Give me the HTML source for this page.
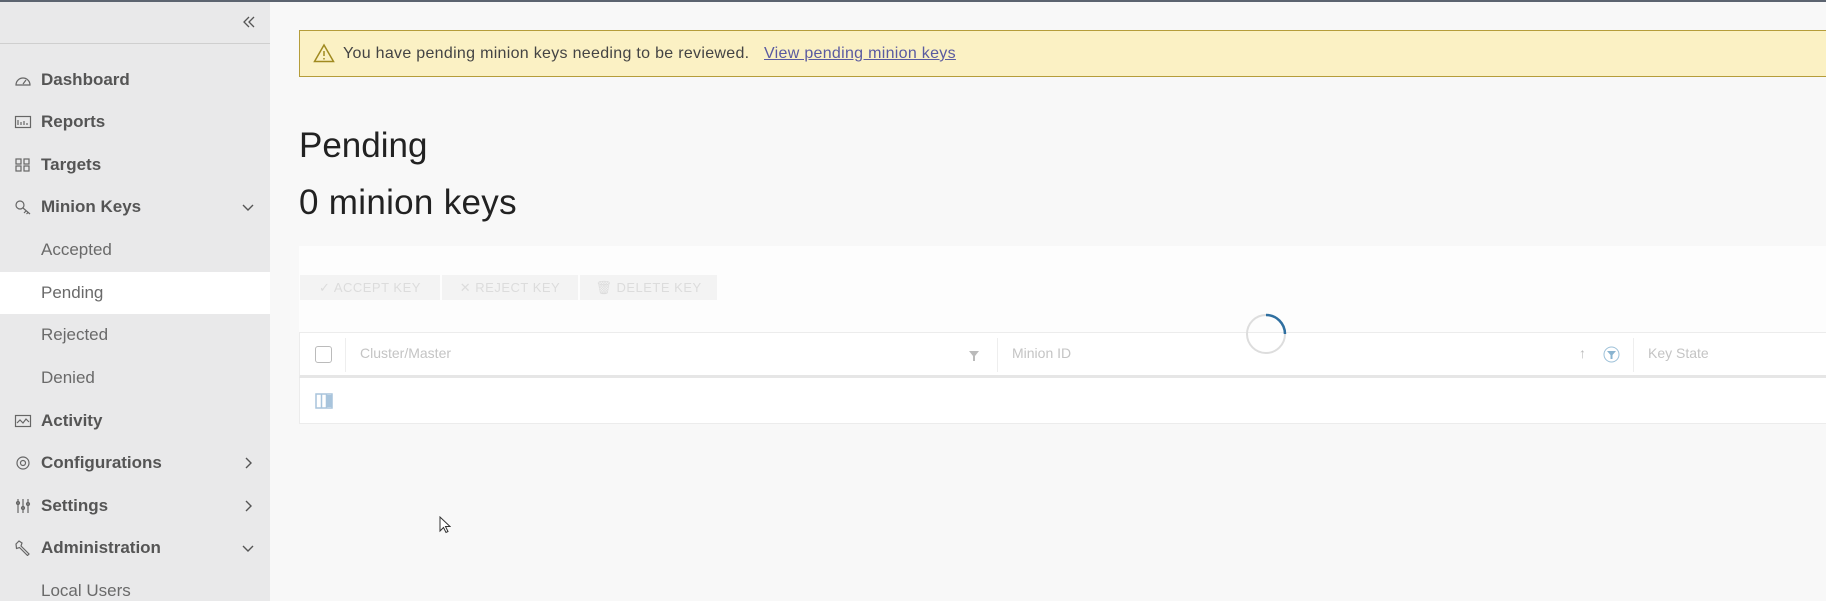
<!DOCTYPE html>
<html><head><meta charset="utf-8"><style>
*{margin:0;padding:0;box-sizing:border-box}
html,body{width:1826px;height:601px;overflow:hidden}
body{background:#f8f8f8;font-family:"Liberation Sans",sans-serif;position:relative}
.topbar{position:absolute;left:0;top:0;width:1826px;height:2px;background:#5c6470}
.side{position:absolute;left:0;top:2px;width:270px;height:599px;background:#e9e9ea}
.col{position:absolute;left:0;top:41px;width:270px;height:1px;background:#cfcfcf}
.it{position:absolute;left:0;width:270px;height:42px;line-height:42px;font-size:17px;color:#555}
.it b{position:absolute;left:41px;font-weight:bold;color:#555}
.it span{position:absolute;left:41px;color:#6a6a6a}
.it svg.ic{position:absolute;left:14px;top:13px}
.it .ch{position:absolute;left:241px;top:14px}
.sel{background:#fff}
.ab{position:absolute}
.banner{position:absolute;left:299px;top:30px;width:1540px;height:47px;background:#fbf1c4;border:1px solid #b59d3a;font-size:16px;letter-spacing:.3px;color:#444;line-height:45px}
.h{position:absolute;left:299px;font-size:35px;color:#222}
.panel{position:absolute;left:299px;top:246px;width:1540px;height:178px;background:#fdfdfd}
.btn{position:absolute;top:275px;height:25px;background:#f3f3f3;font-size:13px;color:#dcdcdc;line-height:25px;text-align:center;letter-spacing:.5px}
.th{position:absolute;left:299px;top:332px;width:1540px;height:46px;background:#fff;border:1px solid #ececec;border-bottom:3px solid #e6e6e6}
.tr{position:absolute;left:299px;top:378px;width:1540px;height:46px;background:#fff;border:1px solid #ececec;border-top:none}
.hd{position:absolute;top:345px;font-size:14px;color:#c4c4c4}
</style></head><body>
<div class="topbar"></div>
<div class="side">
<svg class="ab" style="left:242px;top:13px" width="14" height="14" viewBox="0 0 14 14" fill="none" stroke="#555" stroke-width="1.3"><path d="M7 2L2 7l5 5M12 2L7 7l5 5"/></svg>
<div class="col"></div>
</div>
<div class="it" style="top:59px"><svg class="ic" width="18" height="16" viewBox="0 0 18 16" fill="none" stroke="#666" stroke-width="1.2"><path d="M2 13a7 7 0 1 1 14 0z"/><path d="M9 12l3-4"/></svg><b>Dashboard</b></div>
<div class="it" style="top:101px"><svg class="ic" width="18" height="16" viewBox="0 0 18 16" fill="none" stroke="#666" stroke-width="1.2"><rect x="1.5" y="2.5" width="15" height="11"/><path d="M4 11V6M7 11V8M10 11V7M13 11V9"/></svg><b>Reports</b></div>
<div class="it" style="top:144px"><svg class="ic" width="18" height="16" viewBox="0 0 18 16" fill="none" stroke="#666" stroke-width="1.2"><rect x="2" y="2" width="5" height="5"/><rect x="10" y="2" width="5" height="5"/><rect x="2" y="9" width="5" height="5"/><rect x="10" y="9" width="5" height="5"/></svg><b>Targets</b></div>
<div class="it" style="top:186px"><svg class="ic" width="18" height="16" viewBox="0 0 18 16" fill="none" stroke="#666" stroke-width="1.2"><circle cx="6" cy="6" r="4"/><path d="M9 9l7 6M12 12l-2 2M14 13.5l-1.5 1.5"/></svg><b>Minion Keys</b><svg class="ch" width="14" height="14" viewBox="0 0 14 14" fill="none" stroke="#555" stroke-width="1.4"><path d="M2 5l5 5 5-5"/></svg></div>
<div class="it" style="top:229px"><span>Accepted</span></div>
<div class="it sel" style="top:272px"><span>Pending</span></div>
<div class="it" style="top:314px"><span>Rejected</span></div>
<div class="it" style="top:357px"><span>Denied</span></div>
<div class="it" style="top:400px"><svg class="ic" width="18" height="16" viewBox="0 0 18 16" fill="none" stroke="#666" stroke-width="1.2"><rect x="1.5" y="2.5" width="15" height="11"/><path d="M3 10l3-3 3 3 3-4 3 3"/></svg><b>Activity</b></div>
<div class="it" style="top:442px"><svg class="ic" width="18" height="16" viewBox="0 0 18 16" fill="none" stroke="#666" stroke-width="1.2"><circle cx="9" cy="8" r="2.5"/><circle cx="9" cy="8" r="6"/></svg><b>Configurations</b><svg class="ch" width="14" height="14" viewBox="0 0 14 14" fill="none" stroke="#555" stroke-width="1.4"><path d="M5 2l5 5-5 5"/></svg></div>
<div class="it" style="top:485px"><svg class="ic" width="18" height="16" viewBox="0 0 18 16" fill="none" stroke="#666" stroke-width="1.2"><path d="M4 1v14M9 1v14M14 1v14"/><circle cx="4" cy="5" r="1.5"/><circle cx="9" cy="10" r="1.5"/><circle cx="14" cy="6" r="1.5"/></svg><b>Settings</b><svg class="ch" width="14" height="14" viewBox="0 0 14 14" fill="none" stroke="#555" stroke-width="1.4"><path d="M5 2l5 5-5 5"/></svg></div>
<div class="it" style="top:527px"><svg class="ic" width="18" height="16" viewBox="0 0 18 16" fill="none" stroke="#666" stroke-width="1.2"><path d="M2 4l3-3 3 2-1 3 8 8-1.5 1.5-8-8-3 1z"/></svg><b>Administration</b><svg class="ch" width="14" height="14" viewBox="0 0 14 14" fill="none" stroke="#555" stroke-width="1.4"><path d="M2 5l5 5 5-5"/></svg></div>
<div class="it" style="top:570px"><span>Local Users</span></div>

<div class="banner"><svg class="ab" style="left:13px;top:12px" width="22" height="20" viewBox="0 0 22 20" fill="none" stroke="#a08a20" stroke-width="1.5"><path d="M11 2L1.5 18.5h19z"/><path d="M11 8v5M11 15v1.5"/></svg><span style="position:absolute;left:43px">You have pending minion keys needing to be reviewed.</span><span style="position:absolute;left:464px;color:#5a5aa0;text-decoration:underline">View pending minion keys</span></div>
<div class="h" style="top:126px">Pending</div>
<div class="h" style="top:183px;letter-spacing:.3px">0 minion keys</div>
<div class="panel"></div>
<div class="btn" style="left:300px;width:140px">✓ ACCEPT KEY</div>
<div class="btn" style="left:442px;width:136px">✕ REJECT KEY</div>
<div class="btn" style="left:580px;width:137px">🗑 DELETE KEY</div>
<div class="th"></div>
<div class="tr"></div>
<div class="ab" style="left:315px;top:346px;width:17px;height:17px;border:1px solid #bbb;border-radius:3px;background:#fff"></div>
<div class="ab" style="left:345px;top:338px;width:1px;height:34px;background:#eee"></div>
<div class="hd" style="left:360px">Cluster/Master</div>
<svg class="ab" style="left:969px;top:350px" width="10" height="12" viewBox="0 0 10 12" fill="#bbb"><path d="M0 1h10L6 6v5H4V6z"/></svg>
<div class="ab" style="left:997px;top:338px;width:1px;height:34px;background:#eee"></div>
<div class="hd" style="left:1012px">Minion ID</div>
<div class="hd" style="left:1579px;color:#bbb">↑</div>
<svg class="ab" style="left:1603px;top:346px" width="17" height="17" viewBox="0 0 17 17"><circle cx="8.5" cy="8.5" r="7.5" fill="none" stroke="#9cc0d8"/><path d="M4 5h9l-3.5 4v4h-2V9z" fill="#8ab4d0"/></svg>
<div class="ab" style="left:1633px;top:338px;width:1px;height:34px;background:#eee"></div>
<div class="hd" style="left:1648px">Key State</div>
<svg class="ab" style="left:315px;top:393px" width="18" height="16" viewBox="0 0 18 16"><rect x="1" y="1" width="16" height="14" fill="none" stroke="#a8c4dc" stroke-width="1.5"/><path d="M6.5 1v14M11.5 1v14" stroke="#a8c4dc" stroke-width="1.5"/><rect x="12" y="2" width="4.5" height="12" fill="#a8c4dc"/></svg>
<svg class="ab" style="left:1245px;top:313px" width="42" height="42" viewBox="0 0 42 42"><circle cx="21" cy="21" r="19" fill="none" stroke="#ddd" stroke-width="2"/><path d="M21 2a19 19 0 0 1 19 19" fill="none" stroke="#2f6fa0" stroke-width="2.5"/></svg>
<svg class="ab" style="left:439px;top:516px" width="12" height="18" viewBox="0 0 12 18"><path d="M1 1v14l3.5-3.5 2.5 5 2-1-2.5-5H11z" fill="#fff" stroke="#333"/></svg>
</body></html>
